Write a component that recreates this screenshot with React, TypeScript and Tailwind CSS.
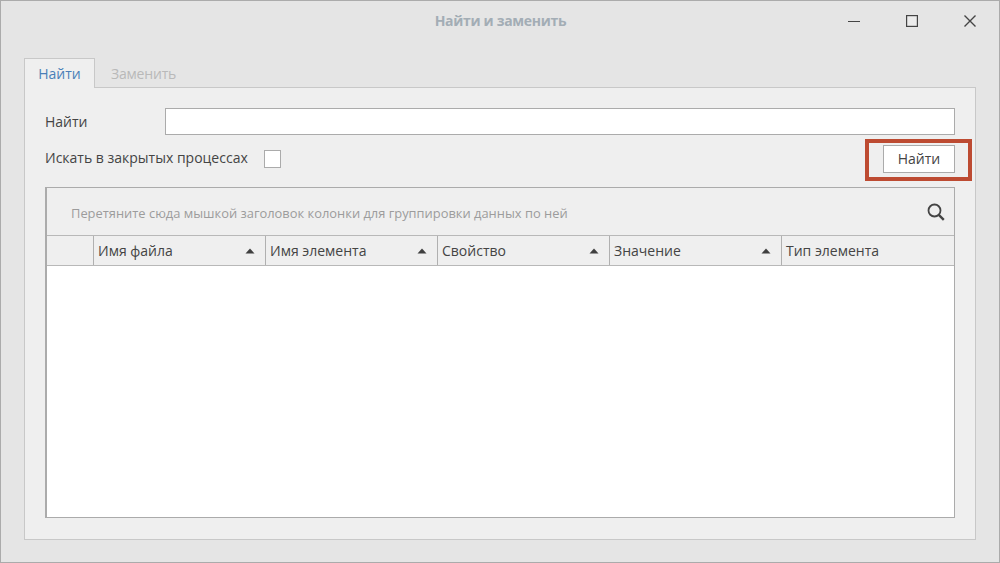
const columns = [
  { title: "Имя файла", sort: true },
  { title: "Имя элемента", sort: true },
  { title: "Свойство", sort: true },
  { title: "Значение", sort: true },
  { title: "Тип элемента", sort: false },
];

function SortArrow() {
  return (
    <svg width="10" height="6" viewBox="0 0 10 6" className="shrink-0 text-[#3f3f3f]">
      <path d="M5 0.5 L9.5 5.5 H0.5 Z" fill="currentColor" />
    </svg>
  );
}

function WindowButtons() {
  return (
    <div className="absolute right-0 top-[14px] flex items-center text-[#444]">
      <div className="flex w-[58px] justify-center">
        <svg width="12" height="12" viewBox="0 0 12 12">
          <path d="M0 6.5 H12" stroke="currentColor" strokeWidth="1" />
        </svg>
      </div>
      <div className="flex w-[58px] justify-center">
        <svg width="12" height="12" viewBox="0 0 12 12">
          <rect x="0.6" y="0.6" width="10.8" height="10.8" fill="#ececec" stroke="currentColor" strokeWidth="1.2" />
        </svg>
      </div>
      <div className="flex w-[58px] justify-center">
        <svg width="12" height="12" viewBox="0 0 12 12">
          <path d="M0.5 0.5 L11.5 11.5 M11.5 0.5 L0.5 11.5" stroke="currentColor" strokeWidth="1.4" />
        </svg>
      </div>
    </div>
  );
}

export default function App() {
  return (
    <div className="flex h-[563px] w-[1000px] flex-col border border-[#ababab] bg-[#e5e5e5] font-['Open_Sans',sans-serif] text-[14px] text-[#444]">
      {/* title bar */}
      <div className="relative flex h-[40px] shrink-0 items-center justify-center">
        <span className="mb-[2px] ml-px text-[14px] font-bold tracking-[-0.3px] text-[#a3adb5]">Найти и заменить</span>
        <WindowButtons />
      </div>

      {/* tabs */}
      <div className="mt-[17px] flex h-[30px] shrink-0 pl-[23px]">
        <div className="z-10 flex h-[30px] w-[71px] items-center justify-center border border-b-0 border-[#c8c8c8] bg-[#efefef] text-[#4a7fb8]">
          Найти
        </div>
        <div className="flex h-[29px] items-center pl-[16px] pt-[2px] tracking-[-0.2px] text-[#b9b9b9]">Заменить</div>
      </div>

      {/* panel */}
      <div className="mx-[23px] -mt-px flex h-[453px] flex-col border border-[#c8c8c8] bg-[#efefef] px-[20px] pt-[20px]">
        <div className="flex h-[27px] items-center">
          <span className="w-[120px]">Найти</span>
          <div className="h-[27px] flex-1 border border-[#ababab] bg-white" />
        </div>

        <div className="relative mt-[10px] flex h-[28px] items-center justify-between">
          <div className="flex items-center">
            <span className="w-[219px] whitespace-nowrap pb-[3px]">Искать в закрытых процессах</span>
            <div className="-mt-px h-[18px] w-[17px] border border-[#ababab] bg-white" />
          </div>
          <button className="h-[28px] w-[72px] border border-[#ababab] bg-white pb-[2px] text-[14px] text-[#444]">Найти</button>
          <div className="absolute -right-[17px] -top-[6px] h-[42px] w-[107px] border-[4px] border-[#bd4b32]" />
        </div>

        {/* grid */}
        <div className="mt-[14px] flex h-[331px] flex-col border border-l-2 border-[#ababab] bg-white">
          <div className="flex h-[47px] shrink-0 items-center justify-between bg-[#efefef] pl-[24px] pr-[9px]">
            <span className="pt-[4px] text-[12.9px] text-[#9c9c9c]">Перетяните сюда мышкой заголовок колонки для группировки данных по ней</span>
            <svg width="18" height="18" viewBox="0 0 18 18" className="mt-[1px] text-[#444]">
              <circle cx="7.5" cy="7.5" r="6" fill="none" stroke="currentColor" strokeWidth="1.8" />
              <path d="M11.8 11.8 L16.8 16.8" stroke="currentColor" strokeWidth="2.4" />
            </svg>
          </div>
          <div className="flex h-[31px] shrink-0 border-y border-[#b8b8b8] bg-[#efefef]">
            <div className="w-[46px] shrink-0" />
            {columns.map((col) => (
              <div key={col.title} className="flex w-[172px] shrink-0 items-center justify-between border-l border-[#b0b0b0] pl-[4px] pr-[10px]">
                <span className="whitespace-nowrap">{col.title}</span>
                {col.sort && <SortArrow />}
              </div>
            ))}
          </div>
          <div className="flex-1 bg-white" />
        </div>
      </div>
    </div>
  );
}
